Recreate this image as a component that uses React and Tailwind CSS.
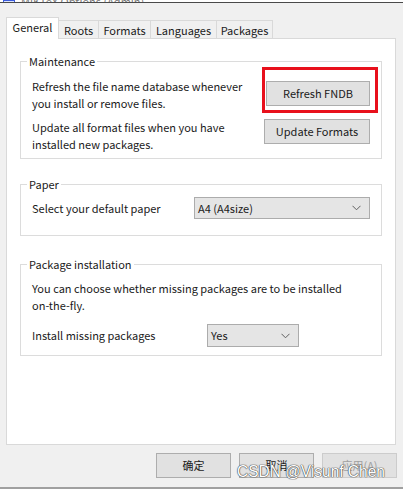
import React from 'react';

function GroupBox({ title, className = '', children }) {
	return (
		<div className={`relative border border-[#dcdcdc] ${className}`}>
			<span className="absolute left-[6px] top-[-9px] bg-white px-[2px] leading-[16px] text-[#1a1a1a]">
				{title}
			</span>
			{children}
		</div>
	);
}

function Button({ children, className = '' }) {
	return (
		<div
			className={`flex items-center justify-center border border-[#adadad] bg-[#e1e1e1] text-[#1a1a1a] ${className}`}
		>
			{children}
		</div>
	);
}

function Select({ value, className = '' }) {
	return (
		<div
			className={`flex items-center justify-between border border-[#acacac] bg-[#e5e5e5] pl-[3px] pr-[8px] text-[#1a1a1a] ${className}`}
		>
			<span>{value}</span>
			<svg width="9" height="6" viewBox="0 0 9 6" fill="none">
				<path d="M0.5 0.8 L4.5 4.8 L8.5 0.8" stroke="#606060" strokeWidth="1" />
			</svg>
		</div>
	);
}

const tabs = [
	{ label: 'Roots', w: 'w-[40px]' },
	{ label: 'Formats', w: 'w-[52px]' },
	{ label: 'Languages', w: 'w-[66px]' },
	{ label: 'Packages', w: 'w-[56px]' },
];

export default function App() {
	return (
		<div
			className="relative flex h-[489px] w-[403px] flex-col overflow-hidden bg-[#f0f0f0] text-[11px] text-[#1a1a1a]"
			style={{ fontFamily: '"Noto Sans CJK SC", "Noto Sans", sans-serif' }}
		>
			{/* clipped title bar */}
			<div className="flex h-[3px] items-end overflow-hidden border-b border-[#4a4a4a] bg-white pl-[3px]">
				<div className="mb-[-8px] mr-[6px] h-[10px] w-[12px] border border-[#3b5bdb] bg-[#dbe4ff]" />
				<span className="mb-[-7px] text-[#777]">MiKTeX Options (Admin)</span>
			</div>

			{/* tabs */}
			<div className="mt-[14px] flex h-[22px] items-end pl-[6px]">
				<div className="relative z-10 flex h-[22px] w-[53px] items-center justify-center border border-b-0 border-[#d9d9d9] bg-white pb-[2px]">
					General
				</div>
				{tabs.map((t) => (
					<div
						key={t.label}
						className={`flex h-[19px] items-center justify-center border border-b-0 border-l-0 border-[#d9d9d9] bg-[#f0f0f0] ${t.w}`}
					>
						{t.label}
					</div>
				))}
			</div>

			{/* page */}
			<div className="ml-[6px] mr-[7px] mt-[-1px] flex h-[407px] flex-col border border-[#d9d9d9] bg-white px-[13px] pt-[22px]">
				<GroupBox title="Maintenance" className="h-[98px]">
					<div className="flex items-start justify-between pl-[11px] pr-[11px] pt-[16px]">
						<p className="leading-[17px]">
							Refresh the file name database whenever
							<br />
							you install or remove files.
						</p>
						<div className="relative mt-[3px]">
							<Button className="h-[25px] w-[104px]">Refresh FNDB</Button>
							<div className="absolute left-[-4px] top-[-14px] h-[46px] w-[116px] border-[3px] border-[#e8101c]" />
						</div>
					</div>
					<div className="mt-[7px] flex items-start justify-between pl-[11px] pr-[11px]">
						<p className="leading-[17px]">
							Update all format files when you have
							<br />
							installed new packages.
						</p>
						<Button className="h-[25px] w-[106px]">Update Formats</Button>
					</div>
				</GroupBox>

				<GroupBox title="Paper" className="mt-[25px] h-[52px]">
					<div className="flex items-center justify-between pl-[11px] pr-[11px] pt-[12px]">
						<span>Select your default paper</span>
						<Select value="A4 (A4size)" className="h-[22px] w-[176px]" />
					</div>
				</GroupBox>

				<GroupBox title="Package installation" className="mt-[28px] h-[92px]">
					<p className="pl-[11px] pt-[15px] leading-[17px]">
						You can choose whether missing packages are to be installed
						<br />
						on-the-fly.
					</p>
					<div className="mt-[10px] flex items-center pl-[11px]">
						<span className="w-[175px]">Install missing packages</span>
						<Select value="Yes" className="h-[23px] w-[92px]" />
					</div>
				</GroupBox>
			</div>

			{/* dialog buttons */}
			<div className="mt-[8px] flex justify-end gap-[8px] pr-[6px]">
				<Button className="h-[25px] w-[75px]">确定</Button>
				<Button className="h-[25px] w-[75px]">取消</Button>
				<Button className="h-[25px] w-[75px] border-[#cccccc] bg-[#cccccc] text-[#a0a0a0]">应用(A)</Button>
			</div>
			<div className="absolute bottom-0 left-0 h-[2px] w-full bg-[#a0a0a0]" />

			{/* watermark */}
			<div
				className="absolute left-[237px] top-[462px] origin-left scale-x-[0.91] whitespace-nowrap text-[17px] leading-[20px] text-white [text-shadow:0_0_1px_#444,0_0_1px_#444,0_0_1px_#444]"
				style={{ fontFamily: '"Liberation Sans", sans-serif' }}
			>
				CSDN @Visunf Chen
			</div>
		</div>
	);
}
